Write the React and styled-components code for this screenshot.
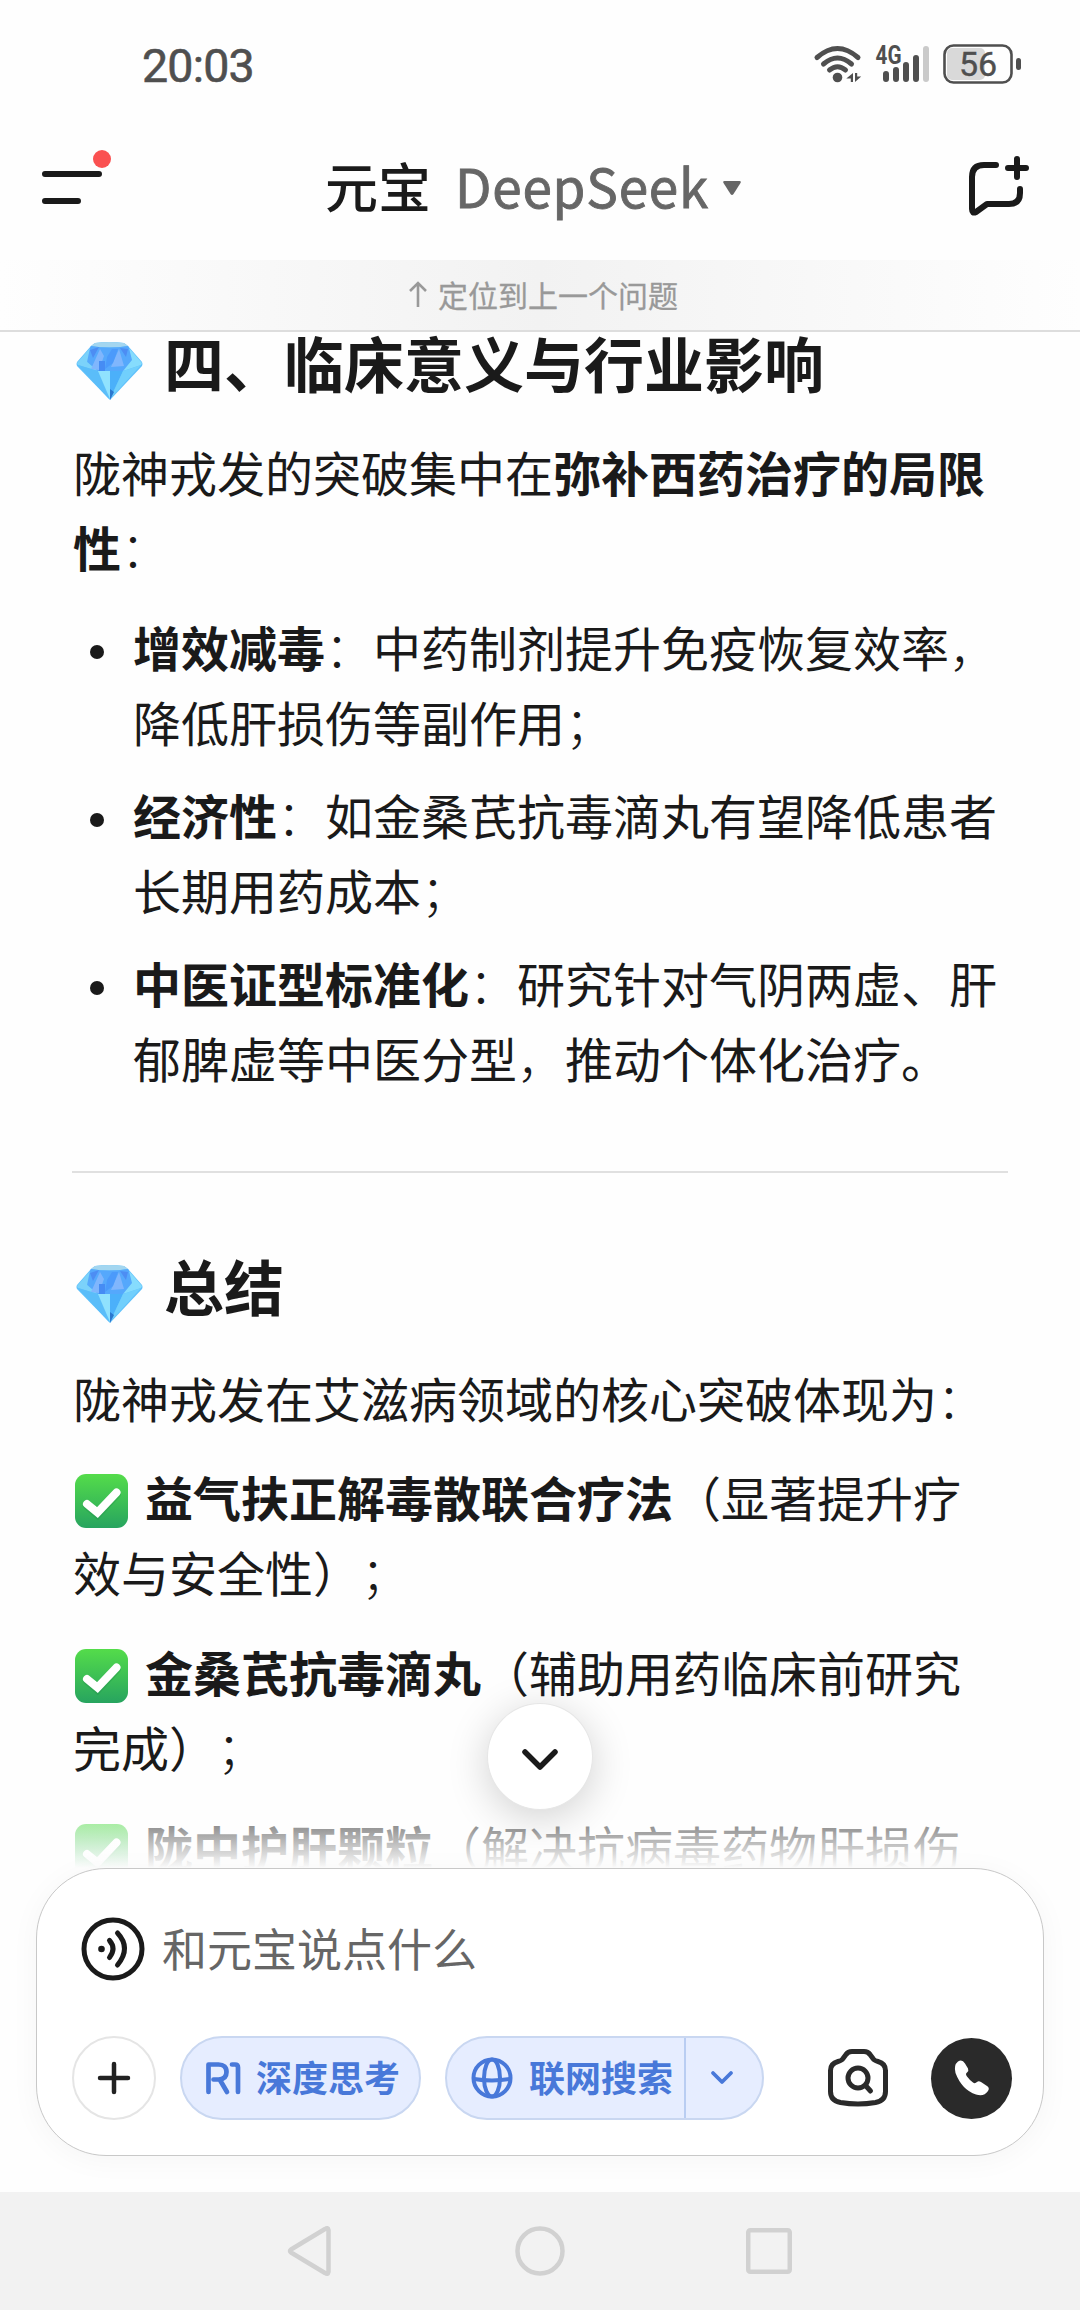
import React from "react";
import styled, { createGlobalStyle } from "styled-components";

const Global = createGlobalStyle`
  * { box-sizing: border-box; }
  html, body { margin: 0; background: #fefefe; }
  body {
    font-family: "Noto Sans CJK SC", "Noto Sans", sans-serif;
    color: #1a1a1a;
    text-spacing-trim: space-all;
  }
  svg { display: block; flex: none; overflow: visible; }
  p, h2, ul { margin: 0; padding: 0; }
`;

const Screen = styled.div`
  width: 1080px;
  height: 2310px;
  display: flex;
  flex-direction: column;
  overflow: hidden;
  background: #fefefe;
`;

const StatusBar = styled.div`
  flex: none;
  height: 96px;
  padding: 36px 59px 0 142px;
  display: flex;
  justify-content: space-between;
  align-items: flex-start;
`;
const Clock = styled.div`
  font: 400 46.5px/60px Roboto, sans-serif;
  color: #4f4f4f;
  letter-spacing: -0.8px;
  -webkit-text-stroke: 0.6px #4f4f4f;
`;
const StatusIcons = styled.svg`
  margin-top: 8px;
`;

const Header = styled.header`
  flex: none;
  height: 164px;
  padding: 0 51px 0 42px;
  display: grid;
  grid-template-columns: 220px 1fr 220px;
`;
const MenuIcon = styled.svg`
  margin-top: 54px;
`;
const NewChatIcon = styled.svg`
  margin-top: 60px;
  justify-self: end;
`;
const Title = styled.div`
  display: flex;
  align-items: center;
  justify-content: flex-start;
  padding: 13px 0 0 63px;
  font-size: 53px;
  line-height: 72px;
  white-space: nowrap;
`;
const AppName = styled.span`
  font-weight: 500;
`;
const ModelName = styled.span`
  margin-left: 24px;
  color: #666;
  font-weight: 400;
  letter-spacing: 0.8px;
  -webkit-text-stroke: 0.9px #666;
`;
const Caret = styled.svg`
  margin: 6px 0 0 14px;
`;

const Locator = styled.div`
  flex: none;
  height: 72px;
  padding: 0 0 2px 409px;
  display: flex;
  align-items: center;
  gap: 11px;
  border-bottom: 2px solid #ddd;
  background: linear-gradient(90deg, #fefefe, #f2f2f2 50%, #fefefe);
  color: #999;
  font-size: 30px;
  -webkit-text-stroke: 0.3px #999;
`;

const Answer = styled.main`
  position: relative;
  flex: none;
  height: 1536px;
  padding: 0 72px 0 73px;
  overflow: hidden;
  font-size: 48px;
  line-height: 75px;
  white-space: nowrap;
`;
const Heading = styled.h2`
  display: flex;
  align-items: center;
  height: 60px;
  margin-top: ${(p) => p.$top}px;
  font-size: 60px;
  line-height: 60px;
  font-weight: 700;
`;
const Gem = styled.svg`
  margin: 17px 21px 0 3px;
`;
const Para = styled.p`
  margin-top: ${(p) => p.$top}px;
`;
const Bold = styled.strong`
  font-weight: 700;
`;
const Mark = styled.span`
  font-weight: 300;
`;
const List = styled.ul`
  list-style: none;
  margin-top: 25px;
`;
const ListItem = styled.li`
  display: flex;
  margin-bottom: 18px;
`;
const Dot = styled.i`
  flex: none;
  width: 14px;
  height: 14px;
  margin: 36px 29px 0 17px;
  border-radius: 50%;
  background: #1a1a1a;
`;
const Rule = styled.div`
  height: 2px;
  margin: 76px 0 0 -1px;
  background: #e0e0e0;
`;
const CheckItem = styled.p`
  margin-top: ${(p) => p.$top || 25}px;
`;
const CheckIcon = styled.svg`
  && { display: inline-block; }
  margin: 0 17px 0 2px;
  vertical-align: -11px;
`;
const Fade = styled.div`
  position: absolute;
  left: 0;
  right: 0;
  bottom: 0;
  height: 88px;
  background: linear-gradient(180deg, rgba(254,254,254,0), #fefefe);
`;
const ScrollDown = styled.button`
  position: absolute;
  left: 487px;
  bottom: 58px;
  width: 106px;
  height: 107px;
  padding: 7px 0 0;
  display: grid;
  place-items: center;
  border: 1.5px solid #e6e6e6;
  border-radius: 50%;
  background: #fff;
  box-shadow: 0 8px 40px rgba(0,0,0,.18);
`;

const Composer = styled.section`
  flex: none;
  position: relative;
  margin: 0 36px;
  height: 288px;
  padding: 48px 31px 0 35px;
  border: 1px solid #c8c8c8;
  border-radius: 70px;
  background: #fff;
  box-shadow: 0 4px 30px rgba(0,0,0,.04);
`;
const InputRow = styled.div`
  display: flex;
  align-items: center;
  height: 63px;
  gap: 17px;
  padding-left: 9px;
  color: #666;
  font-size: 45px;
  line-height: 63px;
`;
const Placeholder = styled.span`
  padding-bottom: 2px;
`;
const Tools = styled.div`
  display: flex;
  align-items: center;
  margin-top: 56px;
  height: 84px;
`;
const RoundButton = styled.button`
  width: 84px;
  height: 84px;
  padding: 0;
  display: grid;
  place-items: center;
  border: 2px solid #e5e5e5;
  border-radius: 50%;
  background: #fff;
`;
const Pill = styled.div`
  display: flex;
  align-items: center;
  width: ${(p) => p.$w}px;
  height: 84px;
  margin-left: 24px;
  padding-left: 24px;
  border: 2px solid #c9d7f1;
  border-radius: 42px;
  background: #e6edff;
  color: #4878d9;
  font-size: 36px;
  font-weight: 700;
  line-height: 52px;
`;
const PillText = styled.span`
  margin: 0 0 4px 16px;
`;
const PillArrow = styled.div`
  display: grid;
  place-items: center;
  align-self: stretch;
  width: 77px;
  margin-left: 11px;
  padding-right: 4px;
  border-left: 2px solid #b9cdf2;
`;
const CameraIcon = styled.svg`
  margin-left: 64px;
`;
const CallButton = styled.button`
  width: 81px;
  height: 81px;
  margin-left: 43px;
  padding: 0;
  display: grid;
  place-items: center;
  border: 0;
  border-radius: 50%;
  background: #2a2a2a;
`;

const NavBar = styled.nav`
  flex: none;
  margin-top: 36px;
  height: 118px;
  padding: 0 288px 0 287px;
  display: flex;
  justify-content: space-between;
  align-items: center;
  background: #f2f2f2;
`;
const HomeIcon = styled.svg`
  margin-left: 3px;
`;

const Diamond = () => (
  <Gem width="67" height="58" viewBox="0 0 67 58">
    <path d="M19 1q14-2 29 0l4 3 14 16q1 2 0 4L34 58 1 24q-1-2 0-4L15 4z" fill="#5ec0fb" />
    <path d="M19 1q14-2 29 0l4 3q-18 3-37 0z" fill="#a3d6f0" />
    <path d="M15 4q18 3 37 0l7 12-11 13H20L8 16z" fill="#55a8fc" />
    <path d="M1 21L14 6l-3 14 11 9-20-6z" fill="#7bd2fa" />
    <path d="M66 21L53 6l3 12-9 11 18-6z" fill="#86dcfd" />
    <path d="M14 8l9-3-6 11zM52 7l-8-1 6 9z" fill="#4d8df3" />
    <path d="M24 7l-9 20 8 1 5-14zM43 7l-8 18 13-1z" fill="#80b6fd" />
    <path d="M23 19h6v10h-6z" fill="#468cf4" />
    <path d="M36 7l6 0-5 14-8 6 2-12z" fill="#4b9afb" />
    <path d="M2 23l20 6 11 28z" fill="#5abdf9" />
    <path d="M22 29h12v28z" fill="#90e2fe" />
    <path d="M34 29h13L34 57z" fill="#4bb0fa" />
    <path d="M47 29l18-6-31 34z" fill="#71cffc" />
    <path d="M34 47l4 3-4 8z" fill="#2b78cf" />
  </Gem>
);

const Check = ({ id }) => (
  <CheckIcon width="53" height="54" viewBox="0 0 53 54">
    <defs>
      <linearGradient id={id} x1="0" y1="0" x2="0" y2="1">
        <stop offset="0" stopColor="#54dc4a" />
        <stop offset="1" stopColor="#27a45f" />
      </linearGradient>
    </defs>
    <rect width="53" height="54" rx="11" fill={`url(#${id})`} />
    <path d="M12 31l10.500 9 19-20" fill="none" stroke="#1f8a45" strokeOpacity=".3" strokeWidth="9" strokeLinecap="round" />
    <path d="M12 30l10.500 8.500 19-20" fill="none" stroke="#fff" strokeWidth="8" strokeLinecap="round" />
  </CheckIcon>
);

export default function App() {
  return (
    <Screen>
      <Global />
      <StatusBar>
        <Clock>20:03</Clock>
        <StatusIcons width="207" height="40" viewBox="814 44 207 40">
          <g fill="none" stroke="#4f4f4f" strokeWidth="5" strokeLinecap="round">
            <path d="M817 57.500Q837.500 39.500 858 57.500" />
            <path d="M823.500 64Q837.500 52 851.500 64" />
            <path d="M829.500 70Q837.500 63.500 845.500 70" />
          </g>
          <circle cx="837.500" cy="77.500" r="4.800" fill="#4f4f4f" />
          <path d="M853 73v9h-2.200v-3.500h-4.500zM855 82v-9h2.200v3.500h4z" fill="#4f4f4f" />
          <text x="875.500" y="64" fontFamily="Roboto, sans-serif" fontWeight="700" fontSize="25" textLength="26" lengthAdjust="spacingAndGlyphs" fill="#4f4f4f">4G</text>
          <g stroke="#4f4f4f" strokeWidth="6" strokeLinecap="round">
            <path d="M886 74v5M896 70v9M906 65v14M916 58v21" />
            <path d="M926 49v30" stroke="#cacaca" />
          </g>
          <rect x="947" y="48" width="38" height="32" rx="5" fill="#d9d9d9" />
          <rect x="944.500" y="45.500" width="67" height="37" rx="9" fill="none" stroke="#4f4f4f" strokeWidth="2.600" />
          <path d="M1018.500 60.500v7" stroke="#4f4f4f" strokeWidth="5" strokeLinecap="round" />
          <text x="978" y="76" textAnchor="middle" fontFamily="Roboto, sans-serif" fontWeight="400" fontSize="34" stroke="#4f4f4f" strokeWidth=".4" fill="#4f4f4f">56</text>
        </StatusIcons>
      </StatusBar>

      <Header>
        <MenuIcon width="70" height="60" viewBox="42 150 70 60">
          <path d="M45 174h54M45 201h33" stroke="#1a1a1a" strokeWidth="6" strokeLinecap="round" />
          <circle cx="102" cy="159" r="9" fill="#fa5151" />
        </MenuIcon>
        <Title>
          <AppName>元宝</AppName>
          <ModelName>DeepSeek</ModelName>
          <Caret width="18" height="14" viewBox="0 0 18 14">
            <path d="M1.500 0h15q2 0 1 2l-7 11q-1.500 2-3 0L.5 2q-1-2 1-2z" fill="#666" />
          </Caret>
        </Title>
        <NewChatIcon width="60" height="60" viewBox="969 156 60 60" fill="none" stroke="#1a1a1a" strokeWidth="6" strokeLinecap="round" strokeLinejoin="round">
          <path d="M996 165H984q-12 0-12 12v32q0 5 4 3l11-8h22q11 0 11-11v-4" />
          <path d="M1008 168h18M1017 159v18" />
        </NewChatIcon>
      </Header>

      <Locator>
        <svg width="18" height="26" viewBox="0 0 18 26" fill="none" stroke="#999" strokeWidth="2.600">
          <path d="M9 26V2M1 10l8-8 8 8" />
        </svg>
        <span>定位到上一个问题</span>
      </Locator>

      <Answer>
        <Heading $top={0}><Diamond />四、临床意义与行业影响</Heading>
        <Para $top={42}>
          陇神戎发的突破集中在<Bold>弥补西药治疗的局限</Bold><br />
          <Bold>性</Bold><Mark>：</Mark>
        </Para>
        <List>
          <ListItem><Dot /><div><Bold>增效减毒</Bold><Mark>：</Mark>中药制剂提升免疫恢复效率<Mark>，</Mark><br />降低肝损伤等副作用<Mark>；</Mark></div></ListItem>
          <ListItem><Dot /><div><Bold>经济性</Bold><Mark>：</Mark>如金桑芪抗毒滴丸有望降低患者<br />长期用药成本<Mark>；</Mark></div></ListItem>
          <ListItem><Dot /><div><Bold>中医证型标准化</Bold><Mark>：</Mark>研究针对气阴两虚、肝<br />郁脾虚等中医分型<Mark>，</Mark>推动个体化治疗。</div></ListItem>
        </List>
        <Rule />
        <Heading $top={82}><Diamond />总结</Heading>
        <Para $top={45}>陇神戎发在艾滋病领域的核心突破体现为<Mark>：</Mark></Para>
        <CheckItem $top={24}><Check id="c1" /><Bold>益气扶正解毒散联合疗法</Bold>（显著提升疗<br />效与安全性）<Mark>；</Mark></CheckItem>
        <CheckItem><Check id="c2" /><Bold>金桑芪抗毒滴丸</Bold>（辅助用药临床前研究<br />完成）<Mark>；</Mark></CheckItem>
        <CheckItem><Check id="c3" /><Bold>陇中护肝颗粒</Bold>（解决抗病毒药物肝损伤</CheckItem>
        <Fade />
        <ScrollDown>
          <svg width="36" height="24" viewBox="0 0 36 24" fill="none" stroke="#1a1a1a" strokeWidth="5.500" strokeLinecap="round" strokeLinejoin="round">
            <path d="M3 4l15 15L33 4" />
          </svg>
        </ScrollDown>
      </Answer>

      <Composer>
        <InputRow>
          <svg width="64" height="64" viewBox="0 0 64 64" fill="none" stroke="#1a1a1a" strokeWidth="5" strokeLinecap="round">
            <circle cx="32" cy="32" r="29" />
            <path d="M28.500 23.500q7 8 0 17M36.500 16q14 15 0 32" />
            <circle cx="20.500" cy="32" r="3.300" fill="#1a1a1a" stroke="none" />
          </svg>
          <Placeholder>和元宝说点什么</Placeholder>
        </InputRow>
        <Tools>
          <RoundButton>
            <svg width="34" height="34" viewBox="0 0 34 34" stroke="#222" strokeWidth="4.500" strokeLinecap="round">
              <path d="M3 17h28M17 3v28" />
            </svg>
          </RoundButton>
          <Pill $w={241}>
            <svg width="34" height="32" viewBox="0 0 34 32" fill="none" stroke="#4878d9" strokeWidth="4.700" strokeLinecap="round" strokeLinejoin="round">
              <path d="M2.500 30V2.500h10q8 0 8 7.500t-8 7.500h-5M14 18l7 12M26 2.500h3q3 0 3 3V30" />
            </svg>
            <PillText>深度思考</PillText>
          </Pill>
          <Pill $w={319}>
            <svg width="42" height="42" viewBox="0 0 42 42" fill="none" stroke="#4878d9" strokeWidth="4">
              <circle cx="21" cy="21" r="18.500" />
              <ellipse cx="21" cy="21" rx="8" ry="18.500" />
              <path d="M3 22q18 3 36 0" />
            </svg>
            <PillText>联网搜索</PillText>
            <PillArrow>
              <svg width="22" height="14" viewBox="0 0 22 14" fill="none" stroke="#4878d9" strokeWidth="3.800" strokeLinecap="round" strokeLinejoin="round">
                <path d="M2 2l9 9 9-9" />
              </svg>
            </PillArrow>
          </Pill>
          <CameraIcon width="60" height="58" viewBox="0 0 60 58" fill="none" stroke="#2a2a2a" strokeWidth="5" strokeLinecap="round" strokeLinejoin="round">
            <path d="M24 2.500h12q4 0 6 3l3 4q1 2 5 3 7.500 2 7.500 9v21q0 9-10 11-17.500 3-35 0-10-2-10-11v-21q0-7 7.500-9 4-1 5-3l3-4q2-3 6-3z" />
            <circle cx="30" cy="29" r="10" />
            <path d="M38 37l4.500 5" />
          </CameraIcon>
          <CallButton>
            <svg width="36" height="36" viewBox="0 0 36 36" fill="#fff">
              <path d="M4 1.500q4-3 7 2l3 5q1 2-1 4-2 1.500 0 4 3 4 6 6 2 1.500 4-.5 1.500-1.500 4 0l6 4q3 2 1 5-4 6-12 3.500Q8 30 1.500 13-.5 5 4 1.500z" />
            </svg>
          </CallButton>
        </Tools>
      </Composer>

      <NavBar>
        <svg width="44" height="50" viewBox="0 0 44 50" fill="none" stroke="#d1d1d1" strokeWidth="4.500" strokeLinejoin="round">
          <path d="M38 3L4 23.500q-2 1.500 0 3L38 47q3 2 3.500-1V4q-.5-3-3.500-1z" />
        </svg>
        <HomeIcon width="50" height="50" viewBox="0 0 50 50" fill="none" stroke="#d1d1d1" strokeWidth="4.500">
          <circle cx="25" cy="25" r="22.500" />
        </HomeIcon>
        <svg width="46" height="46" viewBox="0 0 46 46" fill="none" stroke="#d1d1d1" strokeWidth="4.500">
          <rect x="2.250" y="2.250" width="41.500" height="41.500" rx="2" />
        </svg>
      </NavBar>
    </Screen>
  );
}
